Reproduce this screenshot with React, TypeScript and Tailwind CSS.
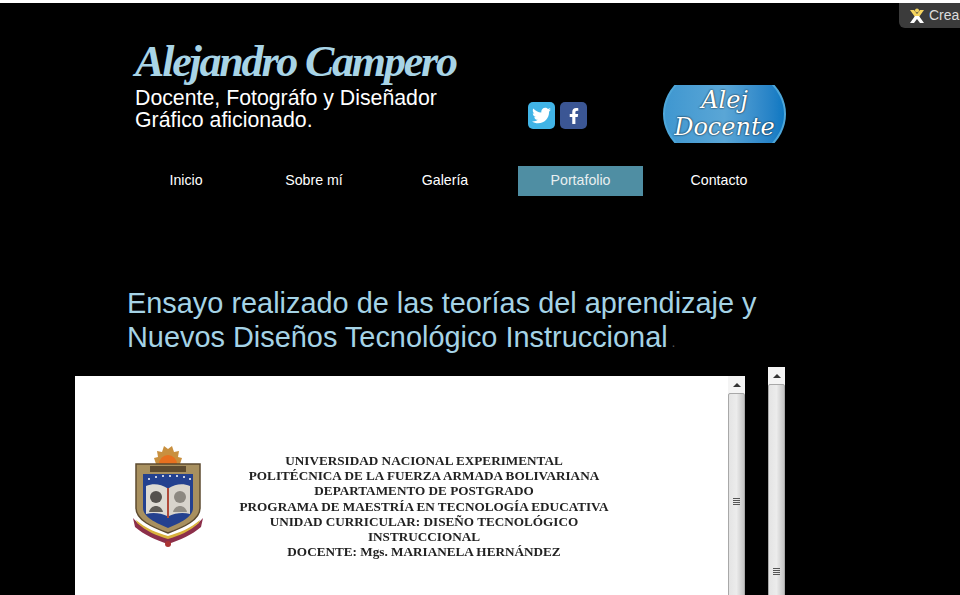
import React from 'react';
import { FaTwitter, FaFacebookF } from 'react-icons/fa';

const navItems = [
  { label: 'Inicio', width: 'w-[122px]' },
  { label: 'Sobre mí', width: 'w-[134px]' },
  { label: 'Galería', width: 'w-[137px] pr-[9px]' },
  { label: 'Portafolio', width: 'w-[125px]', active: true },
  { label: 'Contacto', width: 'w-[152px]' },
];

const letterhead = [
  'UNIVERSIDAD NACIONAL EXPERIMENTAL',
  'POLITÉCNICA DE LA FUERZA ARMADA BOLIVARIANA',
  'DEPARTAMENTO DE POSTGRADO',
  'PROGRAMA DE MAESTRÍA EN TECNOLOGÍA EDUCATIVA',
  'UNIDAD CURRICULAR: DISEÑO TECNOLÓGICO',
  'INSTRUCCIONAL',
  'DOCENTE: Mgs. MARIANELA HERNÁNDEZ',
];

const Scrollbar: React.FC<{ gripTop: string }> = ({ gripTop }) => (
  <div className="relative flex h-full w-[17px] flex-col bg-[#f0f0f0]">
    <div className="flex h-[17px] shrink-0 items-center justify-center bg-[#f4f4f4]">
      <div className="h-0 w-0 border-x-[4px] border-b-[4px] border-x-transparent border-b-[#333]" />
    </div>
    <div className="flex-1 rounded-t-[2px] border border-[#a8a8a8] bg-gradient-to-r from-[#e4e4e4] via-[#ececec] to-[#c4c4c4]" />
    <div className={`absolute left-[5px] flex w-[7px] flex-col gap-[1px] ${gripTop}`}>
      <div className="h-[1px] bg-[#555]" />
      <div className="h-[1px] bg-[#555]" />
      <div className="h-[1px] bg-[#555]" />
      <div className="h-[1px] bg-[#555]" />
    </div>
  </div>
);

const Crest: React.FC = () => (
  <svg width="72" height="106" viewBox="0 0 72 106" className="shrink-0 blur-[0.5px]">
    <path d="M24 22l-2-6 4-1-1-6 5 1 2-6 4 3 4-3 2 6 5-1-1 6 4 1-2 6z" fill="#c9903f" />
    <path d="M27 22a9 9 0 0 1 18 0z" fill="#e8701f" />
    <path d="M4 22h64v44c0 12-16 19-32 25C20 85 4 78 4 66z" fill="#a8905f" stroke="#5d4b30" strokeWidth="1.5" />
    <rect x="18" y="24" width="36" height="6" fill="#5d4b30" />
    <path d="M11 32h50v34c0 9-13 15-25 20C24 81 11 75 11 66z" fill="#24418f" />
    <g fill="#fff">
      <circle cx="17" cy="37" r="1" />
      <circle cx="24" cy="35" r="1" />
      <circle cx="31" cy="34" r="1" />
      <circle cx="38" cy="34" r="1" />
      <circle cx="45" cy="34" r="1" />
      <circle cx="52" cy="35" r="1" />
      <circle cx="58" cy="37" r="1" />
    </g>
    <path d="M14 44c7-3 15-2 21 2v28c-6-3-14-4-21-2z" fill="#dedbd4" />
    <path d="M37 46c6-4 14-5 21-2v28c-7-2-15-1-21 2z" fill="#d8d4cc" />
    <circle cx="24" cy="55" r="6" fill="#55524e" />
    <circle cx="48" cy="55" r="6" fill="#8c8880" />
    <path d="M17 70c2-8 12-8 14 0z" fill="#5f5c57" />
    <path d="M41 70c2-8 12-8 14 0z" fill="#928e86" />
    <rect x="35" y="46" width="2" height="30" fill="#b04a3a" />
    <path d="M1 76c8 10 22 16 35 20 13-4 27-10 35-20l-2 9c-9 8-21 13-33 17-12-4-24-9-33-17z" fill="#8c2f4a" />
    <path d="M4 78c9 8 21 13 32 16 11-3 23-8 32-16l-1 3c-9 8-20 13-31 16-11-3-22-8-31-16z" fill="#d9b23c" />
    <circle cx="36" cy="102" r="3" fill="#a33" />
  </svg>
);

export default function App() {
  return (
    <div className="h-[595px] w-[960px] overflow-hidden bg-black font-['Liberation_Sans',Arial,sans-serif]">
      <div className="h-[3px] bg-white" />
      <div className="relative pl-[75px]">
        <div className="absolute right-0 top-0 flex h-[25px] w-[61px] items-center gap-[4px] overflow-hidden rounded-bl-md bg-[#3b3b3b] pl-[10px] text-[14px] text-[#ddd]">
          <svg width="16" height="16" viewBox="0 0 16 16" className="shrink-0">
            <path d="M1 2l4 0 3 4 3-4 4 0-5 7H6z" fill="#f4d35e" />
            <circle cx="8" cy="2.5" r="2" fill="#f4d35e" />
            <path d="M6 8h4l5 7h-4L8 11l-3 4H1z" fill="#fff" />
          </svg>
          <span className="whitespace-nowrap">Crea</span>
        </div>

        <header className="flex h-[163px] pl-[60px]">
          <div className="w-[393px] pt-[33px]">
            <div className="whitespace-nowrap font-['Liberation_Serif',serif] text-[44px] font-bold italic leading-[51px] tracking-[-2.2px] text-[#a8d4e6]">
              Alejandro Campero
            </div>
            <p className="text-[21.3px] leading-[22px] text-white">
              Docente, Fotográfo y Diseñador
              <br />
              Gráfico aficionado.
            </p>
          </div>
          <div className="flex items-center gap-[5px] self-start pt-[99px]">
            <div className="flex h-[27px] w-[27px] items-center justify-center rounded-[5px] bg-[#41b4e6] text-white">
              <FaTwitter size={19} />
            </div>
            <div className="flex h-[27px] w-[27px] items-center justify-center rounded-[5px] bg-[#3b5694] text-white">
              <FaFacebookF size={16} />
            </div>
          </div>
          <div className="ml-[76px] mt-[82px] flex h-[58px] w-[123px] items-center overflow-hidden">
            <div className="flex h-[100px] w-[123px] shrink-0 flex-col items-center justify-center rounded-[50%] border-2 border-[#4da6d9] bg-gradient-to-r from-[#3f97d0] via-[#5aa6d6] to-[#0c78c2] font-['DejaVu_Serif',serif] text-[24px] italic leading-[27px] text-white [text-shadow:0_0_2px_#000]">
              <span>Alej</span>
              <span>Docente</span>
            </div>
          </div>
        </header>

        <nav className="ml-[50px] flex h-[30px] items-center text-[14.2px] text-white">
          {navItems.map(item => (
            <a
              key={item.label}
              className={`flex h-full items-center justify-center ${item.width} ${item.active ? 'bg-[#4f8ea3] text-[#e8eef0]' : ''}`}
            >
              {item.label}
            </a>
          ))}
        </nav>

        <h1 className="ml-[52px] mt-[90px] whitespace-nowrap text-[28.9px] leading-[34px] text-[#a5d3e6]">
          Ensayo realizado de las teorías del aprendizaje y
          <br />
          Nuevos Diseños Tecnológico Instruccional<span className="text-[14px] text-[#555]"> .</span>
        </h1>

        <div className="mt-[17px] flex items-start">
          <div className="flex h-[220px] w-[670px] bg-white">
            <div className="flex flex-1 items-start pl-[57px] pt-[66px]">
              <Crest />
              <div className="ml-[33px] w-[374px] whitespace-nowrap pt-[11px] text-center font-['Liberation_Serif',serif] text-[13.2px] font-bold leading-[15.2px] text-[#222] blur-[0.3px]">
                {letterhead.map(line => (
                  <div key={line}>{line}</div>
                ))}
              </div>
            </div>
            <Scrollbar gripTop="top-[122px]" />
          </div>
          <div className="-mt-[9px] ml-[23px] h-[229px]">
            <Scrollbar gripTop="top-[201px]" />
          </div>
        </div>
      </div>
    </div>
  );
}
